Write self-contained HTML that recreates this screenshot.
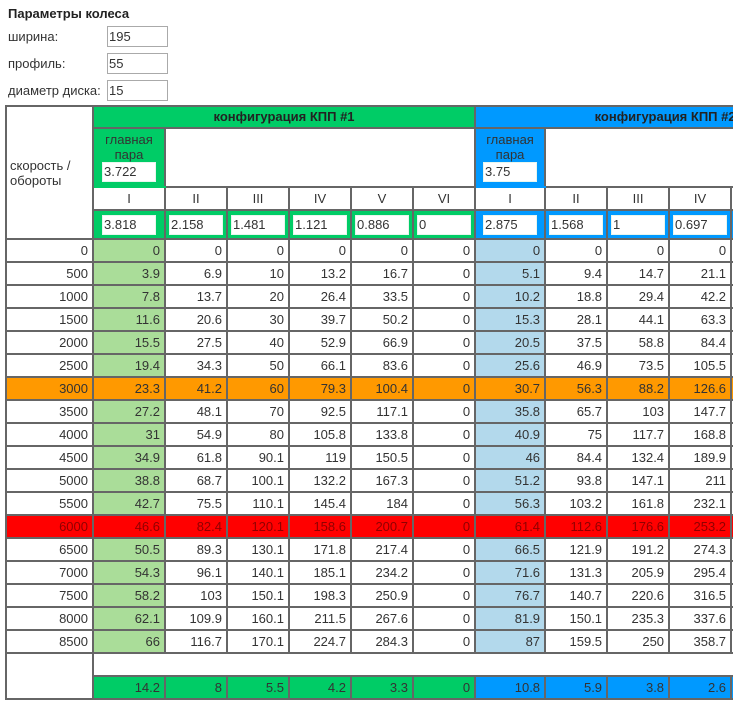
<!DOCTYPE html>
<html>
<head>
<meta charset="utf-8">
<style>
html,body{margin:0;padding:0;width:733px;height:702px;overflow:hidden;background:#fff}
body{font:13px "Liberation Sans",Arial,sans-serif;color:#333;position:relative}
.h{position:absolute;left:8px;top:6px;font-weight:bold;color:#222}
.l{position:absolute;left:8px}
.i{position:absolute;left:107px;width:61px;height:21px;box-sizing:border-box;border:1px solid #aaa;padding:0 1px;line-height:19px;background:#fff;color:#333}
table{position:absolute;left:5px;top:105px;border-collapse:collapse;table-layout:fixed;width:850px}
td{border:2px solid #666;padding:0 4px 0 0;text-align:right;height:19px;line-height:15px;box-sizing:content-box;overflow:hidden;white-space:nowrap}
tr.t td{height:21px}
td.c{text-align:center;padding:0;height:21px}
td.g{background:#00cc66}
td.b{background:#0099ff}
td.lg{background:#aadd99}
td.lb{background:#b3d9ec}
tr.o td{background:#ff9900}
tr.r td{background:#ff0000;color:#8f0000}
td.hd{font-weight:bold;color:#222;text-align:center;padding:0 0 2px 0;height:18px}
td.left{text-align:left;padding-left:3px;background:#fff}
td.mg{text-align:center;padding:0;height:59px;vertical-align:top;line-height:15px;padding-top:3px;box-sizing:border-box}
td.mg.g{border-top-color:#00a855;border-bottom-color:#00cc66}
td.mg.b{border-bottom-color:#0099ff}
td.in{padding:0;text-align:center;height:27px}
.bx{display:inline-block;box-sizing:border-box;width:54px;height:20px;background:#fff;border:1px solid #e8f6ee;text-align:left;line-height:18px;padding-left:1px;color:#333;vertical-align:middle}
td.mg .bx{display:block;margin:0 auto}
</style>
</head>
<body>
<div class="h">Параметры колеса</div>
<div class="l" style="top:29px">ширина:</div>
<div class="i" style="top:26px">195</div>
<div class="l" style="top:56px">профиль:</div>
<div class="i" style="top:53px">55</div>
<div class="l" style="top:83px">диаметр диска:</div>
<div class="i" style="top:80px">15</div>
<table>
<colgroup><col style="width:87px"><col style="width:72px"><col style="width:62px"><col style="width:62px"><col style="width:62px"><col style="width:62px"><col style="width:62px"><col style="width:70px"><col style="width:62px"><col style="width:62px"><col style="width:62px"><col style="width:62px"><col style="width:62px"></colgroup>
<tr><td class="left" rowspan="4">скорость /<br>обороты</td><td class="hd g" colspan="6">конфигурация КПП #1</td><td class="hd b" colspan="6">конфигурация КПП #2</td></tr>
<tr><td class="mg g">главная<br>пара<span class="bx">3.722</span></td><td colspan="5" style="background:#fff"></td><td class="mg b">главная<br>пара<span class="bx">3.75</span></td><td colspan="5" style="background:#fff"></td></tr>
<tr><td class="c">I</td><td class="c">II</td><td class="c">III</td><td class="c">IV</td><td class="c">V</td><td class="c">VI</td><td class="c">I</td><td class="c">II</td><td class="c">III</td><td class="c">IV</td><td class="c"></td><td class="c"></td></tr>
<tr><td class="in g"><span class="bx">3.818</span></td><td class="in g"><span class="bx">2.158</span></td><td class="in g"><span class="bx">1.481</span></td><td class="in g"><span class="bx">1.121</span></td><td class="in g"><span class="bx">0.886</span></td><td class="in g"><span class="bx">0</span></td><td class="in b"><span class="bx">2.875</span></td><td class="in b"><span class="bx">1.568</span></td><td class="in b"><span class="bx">1</span></td><td class="in b"><span class="bx">0.697</span></td><td class="in b"></td><td class="in b"></td></tr>
<tr class="t"><td>0</td><td class="lg">0</td><td>0</td><td>0</td><td>0</td><td>0</td><td>0</td><td class="lb">0</td><td>0</td><td>0</td><td>0</td><td></td><td></td></tr>
<tr class="t"><td>500</td><td class="lg">3.9</td><td>6.9</td><td>10</td><td>13.2</td><td>16.7</td><td>0</td><td class="lb">5.1</td><td>9.4</td><td>14.7</td><td>21.1</td><td></td><td></td></tr>
<tr class="t"><td>1000</td><td class="lg">7.8</td><td>13.7</td><td>20</td><td>26.4</td><td>33.5</td><td>0</td><td class="lb">10.2</td><td>18.8</td><td>29.4</td><td>42.2</td><td></td><td></td></tr>
<tr class="t"><td>1500</td><td class="lg">11.6</td><td>20.6</td><td>30</td><td>39.7</td><td>50.2</td><td>0</td><td class="lb">15.3</td><td>28.1</td><td>44.1</td><td>63.3</td><td></td><td></td></tr>
<tr class="t"><td>2000</td><td class="lg">15.5</td><td>27.5</td><td>40</td><td>52.9</td><td>66.9</td><td>0</td><td class="lb">20.5</td><td>37.5</td><td>58.8</td><td>84.4</td><td></td><td></td></tr>
<tr class="t"><td>2500</td><td class="lg">19.4</td><td>34.3</td><td>50</td><td>66.1</td><td>83.6</td><td>0</td><td class="lb">25.6</td><td>46.9</td><td>73.5</td><td>105.5</td><td></td><td></td></tr>
<tr class="t o"><td>3000</td><td>23.3</td><td>41.2</td><td>60</td><td>79.3</td><td>100.4</td><td>0</td><td>30.7</td><td>56.3</td><td>88.2</td><td>126.6</td><td></td><td></td></tr>
<tr class="t"><td>3500</td><td class="lg">27.2</td><td>48.1</td><td>70</td><td>92.5</td><td>117.1</td><td>0</td><td class="lb">35.8</td><td>65.7</td><td>103</td><td>147.7</td><td></td><td></td></tr>
<tr class="t"><td>4000</td><td class="lg">31</td><td>54.9</td><td>80</td><td>105.8</td><td>133.8</td><td>0</td><td class="lb">40.9</td><td>75</td><td>117.7</td><td>168.8</td><td></td><td></td></tr>
<tr class="t"><td>4500</td><td class="lg">34.9</td><td>61.8</td><td>90.1</td><td>119</td><td>150.5</td><td>0</td><td class="lb">46</td><td>84.4</td><td>132.4</td><td>189.9</td><td></td><td></td></tr>
<tr class="t"><td>5000</td><td class="lg">38.8</td><td>68.7</td><td>100.1</td><td>132.2</td><td>167.3</td><td>0</td><td class="lb">51.2</td><td>93.8</td><td>147.1</td><td>211</td><td></td><td></td></tr>
<tr class="t"><td>5500</td><td class="lg">42.7</td><td>75.5</td><td>110.1</td><td>145.4</td><td>184</td><td>0</td><td class="lb">56.3</td><td>103.2</td><td>161.8</td><td>232.1</td><td></td><td></td></tr>
<tr class="t r"><td>6000</td><td>46.6</td><td>82.4</td><td>120.1</td><td>158.6</td><td>200.7</td><td>0</td><td>61.4</td><td>112.6</td><td>176.6</td><td>253.2</td><td></td><td></td></tr>
<tr class="t"><td>6500</td><td class="lg">50.5</td><td>89.3</td><td>130.1</td><td>171.8</td><td>217.4</td><td>0</td><td class="lb">66.5</td><td>121.9</td><td>191.2</td><td>274.3</td><td></td><td></td></tr>
<tr class="t"><td>7000</td><td class="lg">54.3</td><td>96.1</td><td>140.1</td><td>185.1</td><td>234.2</td><td>0</td><td class="lb">71.6</td><td>131.3</td><td>205.9</td><td>295.4</td><td></td><td></td></tr>
<tr class="t"><td>7500</td><td class="lg">58.2</td><td>103</td><td>150.1</td><td>198.3</td><td>250.9</td><td>0</td><td class="lb">76.7</td><td>140.7</td><td>220.6</td><td>316.5</td><td></td><td></td></tr>
<tr class="t"><td>8000</td><td class="lg">62.1</td><td>109.9</td><td>160.1</td><td>211.5</td><td>267.6</td><td>0</td><td class="lb">81.9</td><td>150.1</td><td>235.3</td><td>337.6</td><td></td><td></td></tr>
<tr class="t"><td>8500</td><td class="lg">66</td><td>116.7</td><td>170.1</td><td>224.7</td><td>284.3</td><td>0</td><td class="lb">87</td><td>159.5</td><td>250</td><td>358.7</td><td></td><td></td></tr>
<tr class="t"><td rowspan="2" style="background:#fff"></td><td colspan="12" style="background:#fff"></td></tr>
<tr class="t"><td class="g">14.2</td><td class="g">8</td><td class="g">5.5</td><td class="g">4.2</td><td class="g">3.3</td><td class="g">0</td><td class="b">10.8</td><td class="b">5.9</td><td class="b">3.8</td><td class="b">2.6</td><td class="b"></td><td class="b"></td></tr>
</table>
</body>
</html>
